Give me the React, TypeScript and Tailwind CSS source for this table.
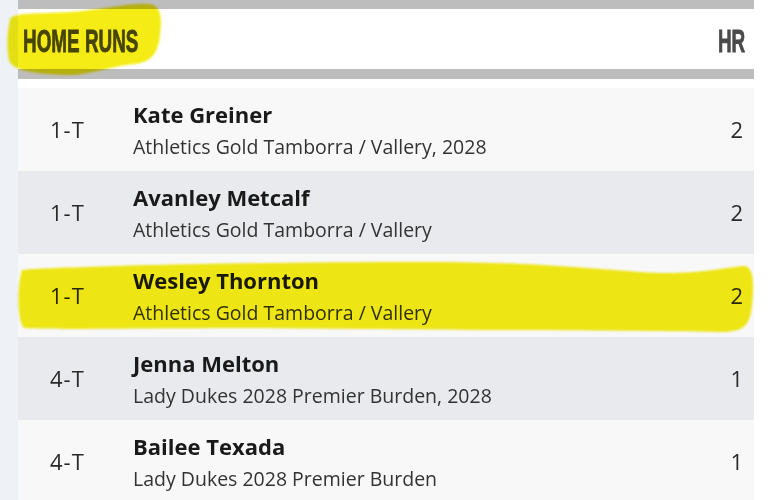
const rows = [
  { rank: '1-T', name: 'Kate Greiner', team: 'Athletics Gold Tamborra / Vallery, 2028', hr: 2 },
  { rank: '1-T', name: 'Avanley Metcalf', team: 'Athletics Gold Tamborra / Vallery', hr: 2 },
  { rank: '1-T', name: 'Wesley Thornton', team: 'Athletics Gold Tamborra / Vallery', hr: 2 },
  { rank: '4-T', name: 'Jenna Melton', team: 'Lady Dukes 2028 Premier Burden, 2028', hr: 1 },
  { rank: '4-T', name: 'Bailee Texada', team: 'Lady Dukes 2028 Premier Burden', hr: 1 },
];

const bodyFont = { fontFamily: '"Open Sans", "Noto Sans", sans-serif' };
const headFont = { fontFamily: '"Liberation Sans", Arial, sans-serif' };

function App() {
  return (
    <div className="relative flex h-[500px] w-[779px] overflow-hidden bg-white" style={bodyFont}>
      <div className="w-[18px] shrink-0 bg-[#eef1f5]" />

      <div className="flex w-[736px] shrink-0 flex-col">
        <div className="h-[9px] shrink-0 bg-[#bdbdbd]" />
        <header className="flex h-[60px] shrink-0 items-center justify-between bg-white pl-[5px] pr-[9px] pt-[3px]" style={headFont}>
          <span className="inline-block origin-left scale-x-[0.59] text-[32px] font-bold leading-none text-[#4a4a4a] [-webkit-text-stroke:0.9px_#4a4a4a]">HOME RUNS</span>
          <span className="inline-block origin-right scale-x-[0.59] text-[32px] font-bold leading-none text-[#4a4a4a] [-webkit-text-stroke:0.9px_#4a4a4a]">HR</span>
        </header>
        <div className="h-[10px] shrink-0 bg-[#bdbdbd]" />
        <div className="h-[9px] shrink-0 bg-white" />

        {rows.map((row, i) => (
          <div
            key={row.name}
            className={`flex h-[83px] shrink-0 items-center ${i % 2 === 0 ? 'bg-[#f8f8f9]' : 'bg-[#e9eaed]'}`}
          >
            <div className="w-[115px] shrink-0 pl-[32px] text-[22px] tracking-[1px] text-[#2a2a2a]">{row.rank}</div>
            <div className="flex flex-1 flex-col gap-[8px]">
              <span className="text-[22px] font-bold leading-[26px] text-[#1a1a1a]">{row.name}</span>
              <span className="text-[19.5px] leading-[24px] text-[#333333]">{row.team}</span>
            </div>
            <div className="pr-[11px] text-[22px] text-[#2a2a2a]">{row.hr}</div>
          </div>
        ))}
      </div>

      <div className="flex-1 bg-white" />

      <svg
        className="pointer-events-none absolute left-0 top-0 mix-blend-multiply blur-[1px]"
        width="779"
        height="500"
        viewBox="0 0 779 500"
      >
        <path
          fill="#f4ec14"
          d="M 10 20 C 10 12, 40 14, 70 12 C 100 10, 130 2, 150 4 C 162 6, 162 20, 160 35 C 158 55, 150 62, 135 64 C 110 66, 90 76, 65 75 C 40 74, 12 72, 9 60 C 6 45, 8 28, 10 20 Z"
        />
        <path
          fill="#f4ec14"
          d="M 22 270 C 80 266, 250 262, 420 262 C 520 262, 560 266, 640 272 C 690 276, 720 268, 745 266 C 754 268, 754 285, 752 305 C 750 325, 745 332, 720 332 C 600 330, 400 330, 250 328 C 150 328, 60 330, 24 328 C 16 320, 18 280, 22 270 Z"
        />
      </svg>
    </div>
  );
}

export default App;
